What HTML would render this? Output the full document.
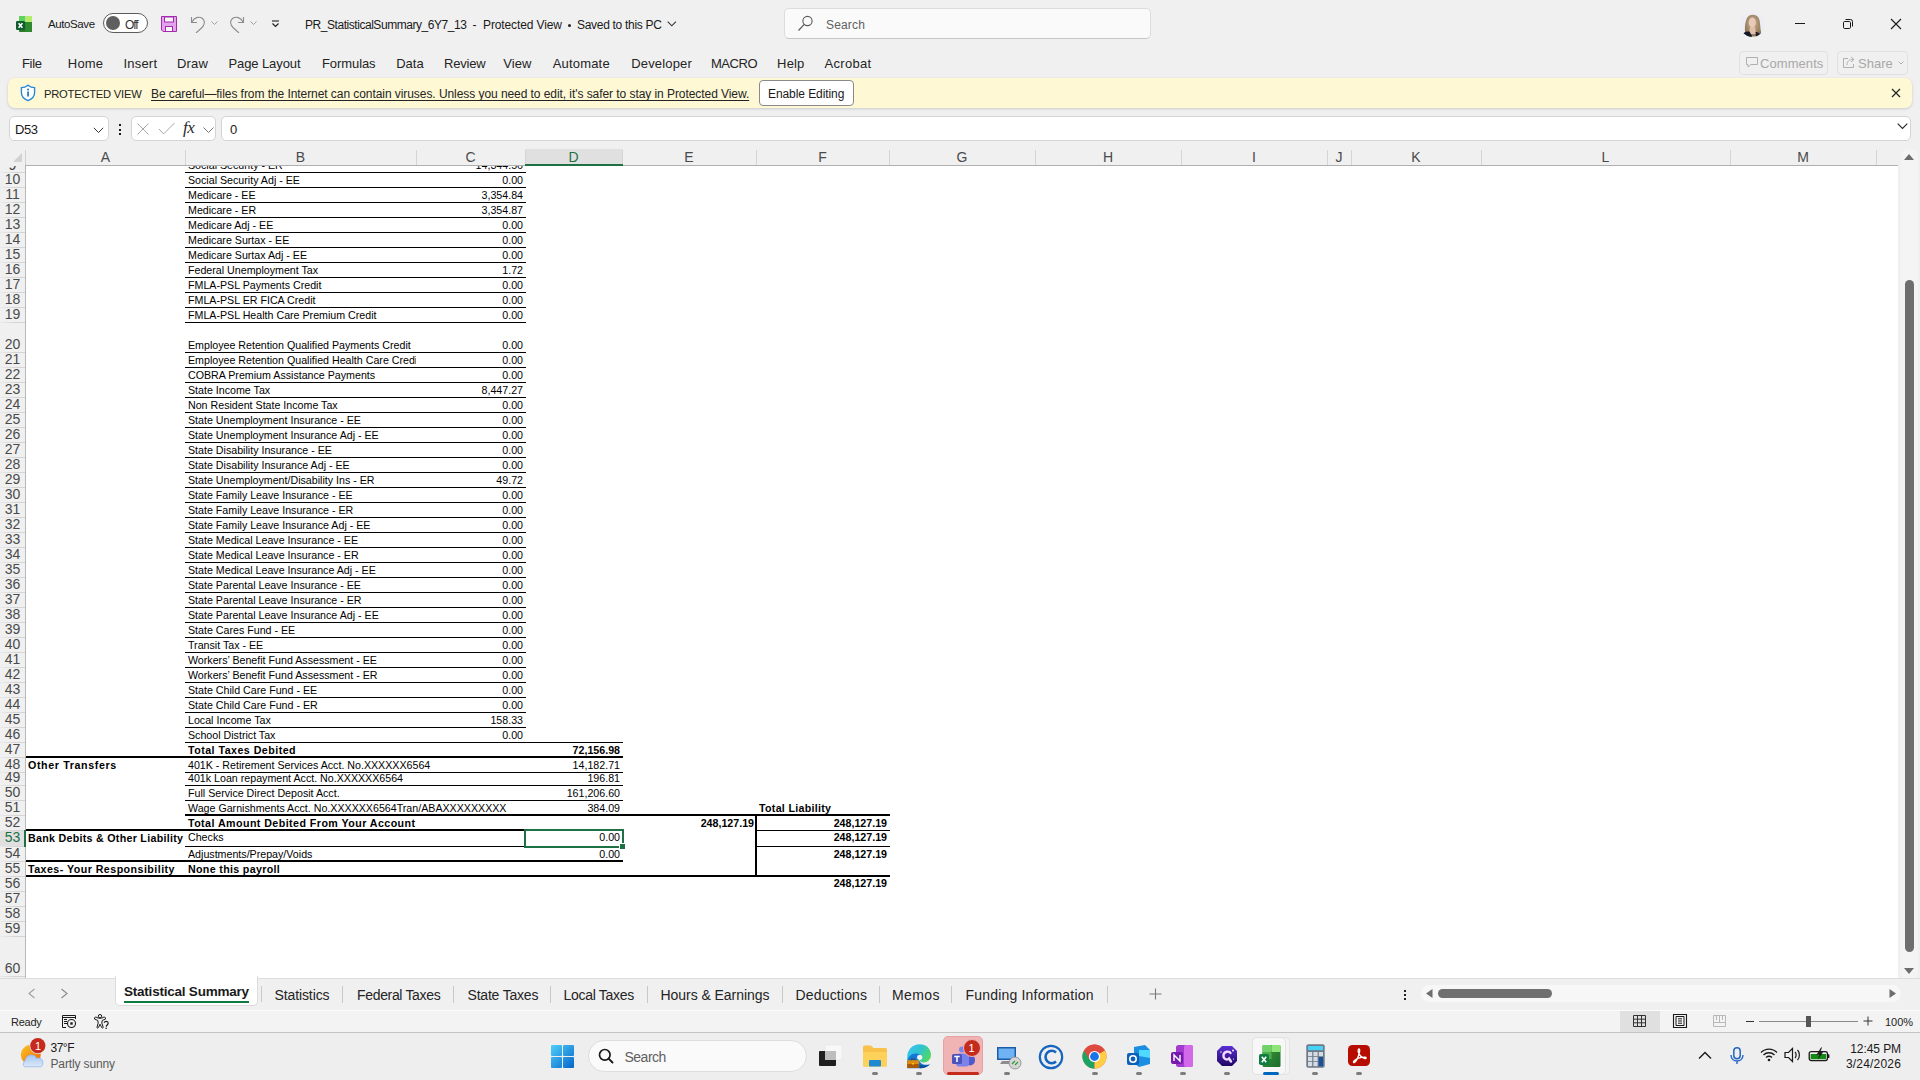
<!DOCTYPE html><html><head><meta charset="utf-8"><title>Excel</title><style>*{margin:0;padding:0;box-sizing:content-box}
html,body{width:1920px;height:1080px;overflow:hidden;background:#f0f0f0;font-family:"Liberation Sans", sans-serif}
.r{position:absolute}
.t{position:absolute;white-space:pre;line-height:1;font-family:"Liberation Sans", sans-serif}
</style></head><body><div class="r" style="left:0px;top:0px;width:1920px;height:147px;background:#f0f0f0;"></div>
<svg class="r" style="left:16px;top:16px;" width="16" height="16" viewBox="0 0 16 16"><rect x="3" y="0" width="6.5" height="6" fill="#5fd35f"/><rect x="9.5" y="0" width="6.5" height="6" fill="#b6ec6c"/><rect x="3" y="6" width="13" height="10" rx="0.8" fill="#2b7d2b"/><rect x="9.5" y="6" width="6.5" height="10" fill="#2f8a2f"/><rect x="0" y="5" width="9" height="9" rx="1.2" fill="#0e5c2f"/><path d="M2.6 7.3 L6.4 11.7 M6.4 7.3 L2.6 11.7" stroke="#fff" stroke-width="1.6"/></svg>
<div id="t1" class="t" style="top:19px;font-size:11.5px;color:#1a1a1a;letter-spacing:-0.400px;left:48px;">AutoSave</div>
<div class="r" style="left:103px;top:13px;width:43px;height:18px;border:1px solid #5c5c5c;border-radius:10px;background:#fff"></div>
<div class="r" style="left:106px;top:16px;width:14px;height:14px;border-radius:50%;background:#5f5f5f"></div>
<div id="t2" class="t" style="top:19px;font-size:12px;color:#333;letter-spacing:-1.050px;left:125px;">Off</div>
<svg class="r" style="left:161px;top:16px;" width="16" height="16" viewBox="0 0 16 16"><path d="M0.5 0.5 H15.5 V15.5 H2 L0.5 14 Z" fill="#e3a3ea" stroke="#a22bb0" stroke-width="1"/><rect x="3.5" y="1" width="9" height="5" fill="#f6f6f6" stroke="#a22bb0" stroke-width="1"/><rect x="4.5" y="10.5" width="7" height="5" fill="#fafafa" stroke="#a22bb0" stroke-width="1"/></svg>
<svg class="r" style="left:190px;top:15px;" width="18" height="18" viewBox="0 0 18 18"><path d="M1.5 2 V7.5 H7" fill="none" stroke="#8c8c8c" stroke-width="1.1"/><path d="M2 7 C4 2.5 9 1 12.5 3.5 C15.5 6 14.5 10 12 12.5 L6 18" fill="none" stroke="#8c8c8c" stroke-width="1.1"/></svg>
<svg class="r" style="left:211px;top:21px;" width="8" height="5" viewBox="0 0 8 5"><path d="M0.5 0.5 L3.5 3.5 L6.5 0.5" fill="none" stroke="#a0a0a0" stroke-width="1"/></svg>
<svg class="r" style="left:229px;top:15px;" width="18" height="18" viewBox="0 0 18 18"><path d="M14.5 2 V7.5 H9" fill="none" stroke="#8c8c8c" stroke-width="1.1"/><path d="M14 7 C12 2.5 7 1 3.5 3.5 C0.5 6 1.5 10 4 12.5 L10 18" fill="none" stroke="#8c8c8c" stroke-width="1.1"/></svg>
<svg class="r" style="left:250px;top:21px;" width="8" height="5" viewBox="0 0 8 5"><path d="M0.5 0.5 L3.5 3.5 L6.5 0.5" fill="none" stroke="#a0a0a0" stroke-width="1"/></svg>
<svg class="r" style="left:271px;top:20px;" width="9" height="8" viewBox="0 0 9 8"><path d="M1 1 H8" stroke="#222" stroke-width="1.1"/><path d="M1.5 3.5 L4.5 6.5 L7.5 3.5" fill="none" stroke="#222" stroke-width="1.2"/></svg>
<div id="t3" class="t" style="top:19px;font-size:12px;color:#1a1a1a;letter-spacing:-0.452px;left:305px;">PR_StatisticalSummary_6Y7_13</div>
<div id="t4" class="t" style="top:19px;font-size:12px;color:#1a1a1a;letter-spacing:0.000px;left:472.5px;">-</div>
<div id="t5" class="t" style="top:19px;font-size:12px;color:#1a1a1a;letter-spacing:-0.115px;left:483px;">Protected View</div>
<div class="r" style="left:568px;top:24px;width:3px;height:3px;background:#222;border-radius:50%;"></div>
<div id="t6" class="t" style="top:19px;font-size:12px;color:#1a1a1a;letter-spacing:-0.300px;left:577px;">Saved to this PC</div>
<svg class="r" style="left:667px;top:21px;" width="10" height="7" viewBox="0 0 10 7"><path d="M0.7 0.7 L4.8 4.8 L8.9 0.7" fill="none" stroke="#333" stroke-width="1.1"/></svg>
<div class="r" style="left:784px;top:8px;width:365px;height:29px;border:1px solid #dcdcdc;border-bottom-color:#c4c4c4;border-radius:5px;background:#fafafa"></div>
<svg class="r" style="left:797px;top:15px;" width="17" height="17" viewBox="0 0 17 17"><circle cx="10.5" cy="6" r="4.6" fill="none" stroke="#5a5a5a" stroke-width="1.1"/><path d="M7.2 9.4 L1.5 15.5" stroke="#5a5a5a" stroke-width="1.2"/></svg>
<div id="t7" class="t" style="top:19px;font-size:12px;color:#616161;letter-spacing:0.160px;left:826px;">Search</div>
<svg class="r" style="left:1740px;top:12px;" width="25" height="25" viewBox="0 0 25 25"><defs><clipPath id="avc"><circle cx="12.3" cy="12.5" r="12.3"/></clipPath><radialGradient id="hair" cx="0.5" cy="0.4" r="0.6"><stop offset="0" stop-color="#c9b08e"/><stop offset="1" stop-color="#8c7456"/></radialGradient></defs><g clip-path="url(#avc)"><rect width="25" height="25" fill="#eceef4"/><path d="M6 24 C4 18 5 10 7 6 C9 2 15 1.5 18 5 C20.5 8 20 14 21 20 C21.5 23 20 25 18 25 Z" fill="url(#hair)"/><ellipse cx="12.3" cy="10.5" rx="3.6" ry="5" fill="#e8cab6"/><path d="M10 15 H15 L16 22 H9 Z" fill="#e2bfa8"/><path d="M1 25 C3 20 6 19 9.5 19.5 L12.5 25 Z" fill="#15172a"/><path d="M15.5 20 C17.5 19.5 20 21 22 25 H16 Z" fill="#1d1f30"/></g></svg>
<div class="r" style="left:1795px;top:23px;width:10px;height:1px;background:#1a1a1a;"></div>
<svg class="r" style="left:1842px;top:18px;" width="12" height="12" viewBox="0 0 12 12"><rect x="1.5" y="3.5" width="7" height="7" rx="1.2" fill="none" stroke="#1a1a1a" stroke-width="1"/><path d="M3.5 1.5 H8.5 A2 2 0 0 1 10.5 3.5 V8.5" fill="none" stroke="#1a1a1a" stroke-width="1"/></svg>
<svg class="r" style="left:1890px;top:18px;" width="12" height="12" viewBox="0 0 12 12"><path d="M1 1 L11 11 M11 1 L1 11" stroke="#1a1a1a" stroke-width="1.1"/></svg>
<div id="t8" class="t" style="top:57px;font-size:13px;color:#242424;letter-spacing:-0.333px;left:22.0px;">File</div>
<div id="t9" class="t" style="top:57px;font-size:13px;color:#242424;letter-spacing:0.200px;left:67.8px;">Home</div>
<div id="t10" class="t" style="top:57px;font-size:13px;color:#242424;letter-spacing:0.200px;left:123.5px;">Insert</div>
<div id="t11" class="t" style="top:57px;font-size:13px;color:#242424;letter-spacing:0.200px;left:177.0px;">Draw</div>
<div id="t12" class="t" style="top:57px;font-size:13px;color:#242424;letter-spacing:-0.100px;left:228.5px;">Page Layout</div>
<div id="t13" class="t" style="top:57px;font-size:13px;color:#242424;letter-spacing:-0.086px;left:322.0px;">Formulas</div>
<div id="t14" class="t" style="top:57px;font-size:13px;color:#242424;letter-spacing:0.033px;left:396.2px;">Data</div>
<div id="t15" class="t" style="top:57px;font-size:13px;color:#242424;letter-spacing:-0.240px;left:444.1px;">Review</div>
<div id="t16" class="t" style="top:57px;font-size:13px;color:#242424;letter-spacing:0.067px;left:503.3px;">View</div>
<div id="t17" class="t" style="top:57px;font-size:13px;color:#242424;letter-spacing:0.186px;left:552.7px;">Automate</div>
<div id="t18" class="t" style="top:57px;font-size:13px;color:#242424;letter-spacing:0.162px;left:631.2px;">Developer</div>
<div id="t19" class="t" style="top:57px;font-size:13px;color:#242424;letter-spacing:-0.400px;left:710.9px;">MACRO</div>
<div id="t20" class="t" style="top:57px;font-size:13px;color:#242424;letter-spacing:0.167px;left:777.1px;">Help</div>
<div id="t21" class="t" style="top:57px;font-size:13px;color:#242424;letter-spacing:0.283px;left:824.6px;">Acrobat</div>
<div class="r" style="left:1739px;top:51px;width:87px;height:22px;border:1px solid #e0e0e0;border-radius:4px"></div>
<svg class="r" style="left:1744px;top:54px;" width="16" height="16" viewBox="0 0 16 16"><path d="M2.5 3.5 H13.5 V10.5 H7 L4 13 V10.5 H2.5 Z" fill="none" stroke="#b0b0b0" stroke-width="1"/></svg>
<div id="t22" class="t" style="top:57px;font-size:13px;color:#a8a8a8;letter-spacing:0.071px;left:1760px;">Comments</div>
<div class="r" style="left:1837px;top:51px;width:69px;height:22px;border:1px solid #e0e0e0;border-radius:4px"></div>
<svg class="r" style="left:1841px;top:54px;" width="16" height="16" viewBox="0 0 16 16"><path d="M7 4.5 H2.5 V13.5 H12.5 V10" fill="none" stroke="#b0b0b0" stroke-width="1"/><path d="M6 11 C6 7 8.5 5.5 12 5.5 M10 3 L13 5.5 L10 8" fill="none" stroke="#b0b0b0" stroke-width="1"/></svg>
<div id="t23" class="t" style="top:57px;font-size:13px;color:#a8a8a8;letter-spacing:0.000px;left:1858px;">Share</div>
<svg class="r" style="left:1898px;top:61px;" width="7" height="5" viewBox="0 0 7 5"><path d="M0.5 0.5 L3 3 L5.5 0.5" fill="none" stroke="#b0b0b0" stroke-width="1"/></svg>
<div class="r" style="left:8px;top:78px;width:1904px;height:30px;border-radius:7px;background:#fef8d5;box-shadow:0 1px 3px rgba(0,0,0,0.16)"></div>
<svg class="r" style="left:20px;top:84px;" width="16" height="18" viewBox="0 0 16 18"><path d="M8 1.2 C10 2.8 12.5 3.6 14.6 3.6 V8.6 C14.6 12.6 11.8 15.3 8 16.6 C4.2 15.3 1.4 12.6 1.4 8.6 V3.6 C3.5 3.6 6 2.8 8 1.2 Z" fill="#fff" stroke="#2b88d8" stroke-width="1.4"/><rect x="7.2" y="7.5" width="1.7" height="5" fill="#1a73c7"/><circle cx="8" cy="5.6" r="1" fill="#1a73c7"/></svg>
<div id="t24" class="t" style="top:89px;font-size:11.2px;color:#242424;letter-spacing:-0.231px;left:44px;">PROTECTED VIEW</div>
<div id="t25" class="t" style="top:88px;font-size:12px;color:#242424;letter-spacing:-0.064px;left:151px;text-decoration:underline;text-underline-offset:1.5px;">Be careful—files from the Internet can contain viruses. Unless you need to edit, it's safer to stay in Protected View.</div>
<div class="r" style="left:759px;top:80px;width:93px;height:24px;border:1px solid #8a8a8a;border-radius:4px;background:#fff"></div>
<div id="t26" class="t" style="top:88px;font-size:12px;color:#1a1a1a;letter-spacing:-0.077px;left:768px;">Enable Editing</div>
<svg class="r" style="left:1891px;top:88px;" width="10" height="10" viewBox="0 0 10 10"><path d="M1 1 L9 9 M9 1 L1 9" stroke="#242424" stroke-width="1.2"/></svg>
<div class="r" style="left:9px;top:116px;width:98px;height:23px;border:1px solid #d4d4d4;border-radius:5px;background:#fff"></div>
<div id="t27" class="t" style="top:123px;font-size:13px;color:#1a1a1a;letter-spacing:-0.450px;left:15px;">D53</div>
<svg class="r" style="left:93px;top:127px;" width="11" height="7" viewBox="0 0 11 7"><path d="M0.8 0.8 L5.5 5.5 L10.2 0.8" fill="none" stroke="#333" stroke-width="1"/></svg>
<div class="r" style="left:119px;top:124px;width:2px;height:2px;background:#1a1a1a;"></div>
<div class="r" style="left:119px;top:128.5px;width:2px;height:2px;background:#1a1a1a;"></div>
<div class="r" style="left:119px;top:133px;width:2px;height:2px;background:#1a1a1a;"></div>
<div class="r" style="left:131px;top:116px;width:83px;height:23px;border:1px solid #d4d4d4;border-radius:5px;background:#fff"></div>
<svg class="r" style="left:137px;top:123px;" width="12" height="12" viewBox="0 0 12 12"><path d="M0.5 0.5 L11.5 11.5 M11.5 0.5 L0.5 11.5" stroke="#a8a8a8" stroke-width="1"/></svg>
<svg class="r" style="left:158px;top:122px;" width="18" height="13" viewBox="0 0 18 13"><path d="M1 7 L5.5 12 L16.5 1" fill="none" stroke="#a8a8a8" stroke-width="1"/></svg>
<div id="t28" class="t" style="top:119px;font-size:17px;color:#2a2a2a;left:183px;font-family:'Liberation Serif',serif;font-style:italic;letter-spacing:-0.5px;">fx</div>
<svg class="r" style="left:203px;top:127px;" width="11" height="6" viewBox="0 0 11 6"><path d="M0.5 0.5 L5.5 5.5 L10.5 0.5" fill="none" stroke="#777" stroke-width="1"/></svg>
<div class="r" style="left:221px;top:116px;width:1688px;height:23px;border:1px solid #d4d4d4;border-radius:5px;background:#fff"></div>
<div id="t29" class="t" style="top:123px;font-size:13px;color:#1a1a1a;left:230px;">0</div>
<svg class="r" style="left:1897px;top:123px;" width="11" height="7" viewBox="0 0 11 7"><path d="M0.7 0.7 L5.5 5.5 L10.3 0.7" fill="none" stroke="#242424" stroke-width="1.1"/></svg>
<svg class="r" style="left:12px;top:152px;" width="11" height="11" viewBox="0 0 11 11"><path d="M10 1 V10 H1 Z" fill="#d2d2d2"/></svg>
<div class="r" style="left:25px;top:150px;width:1px;height:16px;background:#d0d0d0;"></div>
<div class="r" style="left:525px;top:149px;width:98px;height:16px;background:#e0e0e0;"></div>
<div id="t30" class="t" style="top:150px;font-size:14px;color:#4a4a4a;left:105.5px;transform:translateX(-50%);">A</div>
<div class="r" style="left:185px;top:150px;width:1px;height:15px;background:#d4d4d4;"></div>
<div id="t31" class="t" style="top:150px;font-size:14px;color:#4a4a4a;left:300.5px;transform:translateX(-50%);">B</div>
<div class="r" style="left:416px;top:150px;width:1px;height:15px;background:#d4d4d4;"></div>
<div id="t32" class="t" style="top:150px;font-size:14px;color:#4a4a4a;left:470.5px;transform:translateX(-50%);">C</div>
<div class="r" style="left:525px;top:150px;width:1px;height:15px;background:#d4d4d4;"></div>
<div id="t33" class="t" style="top:150px;font-size:14px;color:#1e7145;left:573.5px;transform:translateX(-50%);">D</div>
<div class="r" style="left:622px;top:150px;width:1px;height:15px;background:#d4d4d4;"></div>
<div id="t34" class="t" style="top:150px;font-size:14px;color:#4a4a4a;left:689.0px;transform:translateX(-50%);">E</div>
<div class="r" style="left:756px;top:150px;width:1px;height:15px;background:#d4d4d4;"></div>
<div id="t35" class="t" style="top:150px;font-size:14px;color:#4a4a4a;left:822.5px;transform:translateX(-50%);">F</div>
<div class="r" style="left:889px;top:150px;width:1px;height:15px;background:#d4d4d4;"></div>
<div id="t36" class="t" style="top:150px;font-size:14px;color:#4a4a4a;left:962.0px;transform:translateX(-50%);">G</div>
<div class="r" style="left:1035px;top:150px;width:1px;height:15px;background:#d4d4d4;"></div>
<div id="t37" class="t" style="top:150px;font-size:14px;color:#4a4a4a;left:1108.0px;transform:translateX(-50%);">H</div>
<div class="r" style="left:1181px;top:150px;width:1px;height:15px;background:#d4d4d4;"></div>
<div id="t38" class="t" style="top:150px;font-size:14px;color:#4a4a4a;left:1254.0px;transform:translateX(-50%);">I</div>
<div class="r" style="left:1327px;top:150px;width:1px;height:15px;background:#d4d4d4;"></div>
<div id="t39" class="t" style="top:150px;font-size:14px;color:#4a4a4a;left:1339.0px;transform:translateX(-50%);">J</div>
<div class="r" style="left:1351px;top:150px;width:1px;height:15px;background:#d4d4d4;"></div>
<div id="t40" class="t" style="top:150px;font-size:14px;color:#4a4a4a;left:1416.0px;transform:translateX(-50%);">K</div>
<div class="r" style="left:1481px;top:150px;width:1px;height:15px;background:#d4d4d4;"></div>
<div id="t41" class="t" style="top:150px;font-size:14px;color:#4a4a4a;left:1605.5px;transform:translateX(-50%);">L</div>
<div class="r" style="left:1730px;top:150px;width:1px;height:15px;background:#d4d4d4;"></div>
<div id="t42" class="t" style="top:150px;font-size:14px;color:#4a4a4a;left:1803.0px;transform:translateX(-50%);">M</div>
<div class="r" style="left:1876px;top:150px;width:1px;height:15px;background:#d4d4d4;"></div>
<div class="r" style="left:25px;top:165px;width:1873px;height:1px;background:#b0b0b0;"></div>
<div class="r" style="left:525px;top:164px;width:98px;height:2px;background:#1e7145;"></div>
<div class="r" style="left:0px;top:166px;width:25px;height:812px;background:#f0f0f0;"></div>
<div class="r" style="left:0px;top:830px;width:24px;height:17px;background:#e0e0e0;"></div>
<div class="r" style="left:0px;top:172px;width:25px;height:1px;background:linear-gradient(to right,#ececec,#d4d4d4 60%);"></div>
<div class="r" style="left:0;top:166px;width:25px;height:6px;overflow:hidden"><div class="t" style="top:-8px;left:12.5px;transform:translateX(-50%);font-size:14px;color:#444">9</div></div>
<div class="r" style="left:0px;top:187px;width:25px;height:1px;background:linear-gradient(to right,#ececec,#d4d4d4 60%);"></div>
<div id="t43" class="t" style="top:172px;font-size:14px;color:#4a4a4a;left:12.5px;transform:translateX(-50%);">10</div>
<div class="r" style="left:0px;top:202px;width:25px;height:1px;background:linear-gradient(to right,#ececec,#d4d4d4 60%);"></div>
<div id="t44" class="t" style="top:187px;font-size:14px;color:#4a4a4a;left:12.5px;transform:translateX(-50%);">11</div>
<div class="r" style="left:0px;top:217px;width:25px;height:1px;background:linear-gradient(to right,#ececec,#d4d4d4 60%);"></div>
<div id="t45" class="t" style="top:202px;font-size:14px;color:#4a4a4a;left:12.5px;transform:translateX(-50%);">12</div>
<div class="r" style="left:0px;top:232px;width:25px;height:1px;background:linear-gradient(to right,#ececec,#d4d4d4 60%);"></div>
<div id="t46" class="t" style="top:217px;font-size:14px;color:#4a4a4a;left:12.5px;transform:translateX(-50%);">13</div>
<div class="r" style="left:0px;top:247px;width:25px;height:1px;background:linear-gradient(to right,#ececec,#d4d4d4 60%);"></div>
<div id="t47" class="t" style="top:232px;font-size:14px;color:#4a4a4a;left:12.5px;transform:translateX(-50%);">14</div>
<div class="r" style="left:0px;top:262px;width:25px;height:1px;background:linear-gradient(to right,#ececec,#d4d4d4 60%);"></div>
<div id="t48" class="t" style="top:247px;font-size:14px;color:#4a4a4a;left:12.5px;transform:translateX(-50%);">15</div>
<div class="r" style="left:0px;top:277px;width:25px;height:1px;background:linear-gradient(to right,#ececec,#d4d4d4 60%);"></div>
<div id="t49" class="t" style="top:262px;font-size:14px;color:#4a4a4a;left:12.5px;transform:translateX(-50%);">16</div>
<div class="r" style="left:0px;top:292px;width:25px;height:1px;background:linear-gradient(to right,#ececec,#d4d4d4 60%);"></div>
<div id="t50" class="t" style="top:277px;font-size:14px;color:#4a4a4a;left:12.5px;transform:translateX(-50%);">17</div>
<div class="r" style="left:0px;top:307px;width:25px;height:1px;background:linear-gradient(to right,#ececec,#d4d4d4 60%);"></div>
<div id="t51" class="t" style="top:292px;font-size:14px;color:#4a4a4a;left:12.5px;transform:translateX(-50%);">18</div>
<div class="r" style="left:0px;top:322px;width:25px;height:1px;background:linear-gradient(to right,#ececec,#d4d4d4 60%);"></div>
<div id="t52" class="t" style="top:307px;font-size:14px;color:#4a4a4a;left:12.5px;transform:translateX(-50%);">19</div>
<div class="r" style="left:0px;top:352px;width:25px;height:1px;background:linear-gradient(to right,#ececec,#d4d4d4 60%);"></div>
<div id="t53" class="t" style="top:337px;font-size:14px;color:#4a4a4a;left:12.5px;transform:translateX(-50%);">20</div>
<div class="r" style="left:0px;top:367px;width:25px;height:1px;background:linear-gradient(to right,#ececec,#d4d4d4 60%);"></div>
<div id="t54" class="t" style="top:352px;font-size:14px;color:#4a4a4a;left:12.5px;transform:translateX(-50%);">21</div>
<div class="r" style="left:0px;top:382px;width:25px;height:1px;background:linear-gradient(to right,#ececec,#d4d4d4 60%);"></div>
<div id="t55" class="t" style="top:367px;font-size:14px;color:#4a4a4a;left:12.5px;transform:translateX(-50%);">22</div>
<div class="r" style="left:0px;top:397px;width:25px;height:1px;background:linear-gradient(to right,#ececec,#d4d4d4 60%);"></div>
<div id="t56" class="t" style="top:382px;font-size:14px;color:#4a4a4a;left:12.5px;transform:translateX(-50%);">23</div>
<div class="r" style="left:0px;top:412px;width:25px;height:1px;background:linear-gradient(to right,#ececec,#d4d4d4 60%);"></div>
<div id="t57" class="t" style="top:397px;font-size:14px;color:#4a4a4a;left:12.5px;transform:translateX(-50%);">24</div>
<div class="r" style="left:0px;top:427px;width:25px;height:1px;background:linear-gradient(to right,#ececec,#d4d4d4 60%);"></div>
<div id="t58" class="t" style="top:412px;font-size:14px;color:#4a4a4a;left:12.5px;transform:translateX(-50%);">25</div>
<div class="r" style="left:0px;top:442px;width:25px;height:1px;background:linear-gradient(to right,#ececec,#d4d4d4 60%);"></div>
<div id="t59" class="t" style="top:427px;font-size:14px;color:#4a4a4a;left:12.5px;transform:translateX(-50%);">26</div>
<div class="r" style="left:0px;top:457px;width:25px;height:1px;background:linear-gradient(to right,#ececec,#d4d4d4 60%);"></div>
<div id="t60" class="t" style="top:442px;font-size:14px;color:#4a4a4a;left:12.5px;transform:translateX(-50%);">27</div>
<div class="r" style="left:0px;top:472px;width:25px;height:1px;background:linear-gradient(to right,#ececec,#d4d4d4 60%);"></div>
<div id="t61" class="t" style="top:457px;font-size:14px;color:#4a4a4a;left:12.5px;transform:translateX(-50%);">28</div>
<div class="r" style="left:0px;top:487px;width:25px;height:1px;background:linear-gradient(to right,#ececec,#d4d4d4 60%);"></div>
<div id="t62" class="t" style="top:472px;font-size:14px;color:#4a4a4a;left:12.5px;transform:translateX(-50%);">29</div>
<div class="r" style="left:0px;top:502px;width:25px;height:1px;background:linear-gradient(to right,#ececec,#d4d4d4 60%);"></div>
<div id="t63" class="t" style="top:487px;font-size:14px;color:#4a4a4a;left:12.5px;transform:translateX(-50%);">30</div>
<div class="r" style="left:0px;top:517px;width:25px;height:1px;background:linear-gradient(to right,#ececec,#d4d4d4 60%);"></div>
<div id="t64" class="t" style="top:502px;font-size:14px;color:#4a4a4a;left:12.5px;transform:translateX(-50%);">31</div>
<div class="r" style="left:0px;top:532px;width:25px;height:1px;background:linear-gradient(to right,#ececec,#d4d4d4 60%);"></div>
<div id="t65" class="t" style="top:517px;font-size:14px;color:#4a4a4a;left:12.5px;transform:translateX(-50%);">32</div>
<div class="r" style="left:0px;top:547px;width:25px;height:1px;background:linear-gradient(to right,#ececec,#d4d4d4 60%);"></div>
<div id="t66" class="t" style="top:532px;font-size:14px;color:#4a4a4a;left:12.5px;transform:translateX(-50%);">33</div>
<div class="r" style="left:0px;top:562px;width:25px;height:1px;background:linear-gradient(to right,#ececec,#d4d4d4 60%);"></div>
<div id="t67" class="t" style="top:547px;font-size:14px;color:#4a4a4a;left:12.5px;transform:translateX(-50%);">34</div>
<div class="r" style="left:0px;top:577px;width:25px;height:1px;background:linear-gradient(to right,#ececec,#d4d4d4 60%);"></div>
<div id="t68" class="t" style="top:562px;font-size:14px;color:#4a4a4a;left:12.5px;transform:translateX(-50%);">35</div>
<div class="r" style="left:0px;top:592px;width:25px;height:1px;background:linear-gradient(to right,#ececec,#d4d4d4 60%);"></div>
<div id="t69" class="t" style="top:577px;font-size:14px;color:#4a4a4a;left:12.5px;transform:translateX(-50%);">36</div>
<div class="r" style="left:0px;top:607px;width:25px;height:1px;background:linear-gradient(to right,#ececec,#d4d4d4 60%);"></div>
<div id="t70" class="t" style="top:592px;font-size:14px;color:#4a4a4a;left:12.5px;transform:translateX(-50%);">37</div>
<div class="r" style="left:0px;top:622px;width:25px;height:1px;background:linear-gradient(to right,#ececec,#d4d4d4 60%);"></div>
<div id="t71" class="t" style="top:607px;font-size:14px;color:#4a4a4a;left:12.5px;transform:translateX(-50%);">38</div>
<div class="r" style="left:0px;top:637px;width:25px;height:1px;background:linear-gradient(to right,#ececec,#d4d4d4 60%);"></div>
<div id="t72" class="t" style="top:622px;font-size:14px;color:#4a4a4a;left:12.5px;transform:translateX(-50%);">39</div>
<div class="r" style="left:0px;top:652px;width:25px;height:1px;background:linear-gradient(to right,#ececec,#d4d4d4 60%);"></div>
<div id="t73" class="t" style="top:637px;font-size:14px;color:#4a4a4a;left:12.5px;transform:translateX(-50%);">40</div>
<div class="r" style="left:0px;top:667px;width:25px;height:1px;background:linear-gradient(to right,#ececec,#d4d4d4 60%);"></div>
<div id="t74" class="t" style="top:652px;font-size:14px;color:#4a4a4a;left:12.5px;transform:translateX(-50%);">41</div>
<div class="r" style="left:0px;top:682px;width:25px;height:1px;background:linear-gradient(to right,#ececec,#d4d4d4 60%);"></div>
<div id="t75" class="t" style="top:667px;font-size:14px;color:#4a4a4a;left:12.5px;transform:translateX(-50%);">42</div>
<div class="r" style="left:0px;top:697px;width:25px;height:1px;background:linear-gradient(to right,#ececec,#d4d4d4 60%);"></div>
<div id="t76" class="t" style="top:682px;font-size:14px;color:#4a4a4a;left:12.5px;transform:translateX(-50%);">43</div>
<div class="r" style="left:0px;top:712px;width:25px;height:1px;background:linear-gradient(to right,#ececec,#d4d4d4 60%);"></div>
<div id="t77" class="t" style="top:697px;font-size:14px;color:#4a4a4a;left:12.5px;transform:translateX(-50%);">44</div>
<div class="r" style="left:0px;top:727px;width:25px;height:1px;background:linear-gradient(to right,#ececec,#d4d4d4 60%);"></div>
<div id="t78" class="t" style="top:712px;font-size:14px;color:#4a4a4a;left:12.5px;transform:translateX(-50%);">45</div>
<div class="r" style="left:0px;top:742px;width:25px;height:1px;background:linear-gradient(to right,#ececec,#d4d4d4 60%);"></div>
<div id="t79" class="t" style="top:727px;font-size:14px;color:#4a4a4a;left:12.5px;transform:translateX(-50%);">46</div>
<div class="r" style="left:0px;top:757px;width:25px;height:1px;background:linear-gradient(to right,#ececec,#d4d4d4 60%);"></div>
<div id="t80" class="t" style="top:742px;font-size:14px;color:#4a4a4a;left:12.5px;transform:translateX(-50%);">47</div>
<div class="r" style="left:0px;top:772px;width:25px;height:1px;background:linear-gradient(to right,#ececec,#d4d4d4 60%);"></div>
<div id="t81" class="t" style="top:757px;font-size:14px;color:#4a4a4a;left:12.5px;transform:translateX(-50%);">48</div>
<div class="r" style="left:0px;top:785px;width:25px;height:1px;background:linear-gradient(to right,#ececec,#d4d4d4 60%);"></div>
<div id="t82" class="t" style="top:770px;font-size:14px;color:#4a4a4a;left:12.5px;transform:translateX(-50%);">49</div>
<div class="r" style="left:0px;top:800px;width:25px;height:1px;background:linear-gradient(to right,#ececec,#d4d4d4 60%);"></div>
<div id="t83" class="t" style="top:785px;font-size:14px;color:#4a4a4a;left:12.5px;transform:translateX(-50%);">50</div>
<div class="r" style="left:0px;top:815px;width:25px;height:1px;background:linear-gradient(to right,#ececec,#d4d4d4 60%);"></div>
<div id="t84" class="t" style="top:800px;font-size:14px;color:#4a4a4a;left:12.5px;transform:translateX(-50%);">51</div>
<div class="r" style="left:0px;top:830px;width:25px;height:1px;background:linear-gradient(to right,#ececec,#d4d4d4 60%);"></div>
<div id="t85" class="t" style="top:815px;font-size:14px;color:#4a4a4a;left:12.5px;transform:translateX(-50%);">52</div>
<div class="r" style="left:0px;top:846px;width:25px;height:1px;background:linear-gradient(to right,#ececec,#d4d4d4 60%);"></div>
<div id="t86" class="t" style="top:830px;font-size:14px;color:#1e7145;left:12.5px;transform:translateX(-50%);">53</div>
<div class="r" style="left:0px;top:861px;width:25px;height:1px;background:linear-gradient(to right,#ececec,#d4d4d4 60%);"></div>
<div id="t87" class="t" style="top:846px;font-size:14px;color:#4a4a4a;left:12.5px;transform:translateX(-50%);">54</div>
<div class="r" style="left:0px;top:876px;width:25px;height:1px;background:linear-gradient(to right,#ececec,#d4d4d4 60%);"></div>
<div id="t88" class="t" style="top:861px;font-size:14px;color:#4a4a4a;left:12.5px;transform:translateX(-50%);">55</div>
<div class="r" style="left:0px;top:891px;width:25px;height:1px;background:linear-gradient(to right,#ececec,#d4d4d4 60%);"></div>
<div id="t89" class="t" style="top:876px;font-size:14px;color:#4a4a4a;left:12.5px;transform:translateX(-50%);">56</div>
<div class="r" style="left:0px;top:906px;width:25px;height:1px;background:linear-gradient(to right,#ececec,#d4d4d4 60%);"></div>
<div id="t90" class="t" style="top:891px;font-size:14px;color:#4a4a4a;left:12.5px;transform:translateX(-50%);">57</div>
<div class="r" style="left:0px;top:921px;width:25px;height:1px;background:linear-gradient(to right,#ececec,#d4d4d4 60%);"></div>
<div id="t91" class="t" style="top:906px;font-size:14px;color:#4a4a4a;left:12.5px;transform:translateX(-50%);">58</div>
<div class="r" style="left:0px;top:936px;width:25px;height:1px;background:linear-gradient(to right,#ececec,#d4d4d4 60%);"></div>
<div id="t92" class="t" style="top:921px;font-size:14px;color:#4a4a4a;left:12.5px;transform:translateX(-50%);">59</div>
<div class="r" style="left:0px;top:976px;width:25px;height:1px;background:linear-gradient(to right,#ececec,#d4d4d4 60%);"></div>
<div id="t93" class="t" style="top:961px;font-size:14px;color:#4a4a4a;left:12.5px;transform:translateX(-50%);">60</div>
<div class="r" style="left:25px;top:166px;width:1px;height:812px;background:#b8b8b8;"></div>
<div class="r" style="left:24px;top:830px;width:2px;height:17px;background:#1e7145;"></div>
<div class="r" style="left:26px;top:166px;width:1872px;height:812px;background:#fff"></div>
<div class="r" id="grid" style="left:0;top:166px;width:1898px;height:812px;overflow:hidden"><div class="r" style="left:0;top:-166px;width:1920px;height:1080px">
<div id="t94" class="t" style="top:160px;font-size:10.67px;color:#000;left:188px;">Social Security - ER</div>
<div id="t95" class="t" style="top:160px;font-size:10.67px;color:#000;right:1397px;">14,344.56</div>
<div id="t96" class="t" style="top:175px;font-size:10.67px;color:#000;left:188px;">Social Security Adj - EE</div>
<div id="t97" class="t" style="top:175px;font-size:10.67px;color:#000;right:1397px;">0.00</div>
<div id="t98" class="t" style="top:190px;font-size:10.67px;color:#000;left:188px;">Medicare - EE</div>
<div id="t99" class="t" style="top:190px;font-size:10.67px;color:#000;right:1397px;">3,354.84</div>
<div id="t100" class="t" style="top:205px;font-size:10.67px;color:#000;left:188px;">Medicare - ER</div>
<div id="t101" class="t" style="top:205px;font-size:10.67px;color:#000;right:1397px;">3,354.87</div>
<div id="t102" class="t" style="top:220px;font-size:10.67px;color:#000;left:188px;">Medicare Adj - EE</div>
<div id="t103" class="t" style="top:220px;font-size:10.67px;color:#000;right:1397px;">0.00</div>
<div id="t104" class="t" style="top:235px;font-size:10.67px;color:#000;left:188px;">Medicare Surtax - EE</div>
<div id="t105" class="t" style="top:235px;font-size:10.67px;color:#000;right:1397px;">0.00</div>
<div id="t106" class="t" style="top:250px;font-size:10.67px;color:#000;left:188px;">Medicare Surtax Adj - EE</div>
<div id="t107" class="t" style="top:250px;font-size:10.67px;color:#000;right:1397px;">0.00</div>
<div id="t108" class="t" style="top:265px;font-size:10.67px;color:#000;left:188px;">Federal Unemployment Tax</div>
<div id="t109" class="t" style="top:265px;font-size:10.67px;color:#000;right:1397px;">1.72</div>
<div id="t110" class="t" style="top:280px;font-size:10.67px;color:#000;left:188px;">FMLA-PSL Payments Credit</div>
<div id="t111" class="t" style="top:280px;font-size:10.67px;color:#000;right:1397px;">0.00</div>
<div id="t112" class="t" style="top:295px;font-size:10.67px;color:#000;left:188px;">FMLA-PSL ER FICA Credit</div>
<div id="t113" class="t" style="top:295px;font-size:10.67px;color:#000;right:1397px;">0.00</div>
<div id="t114" class="t" style="top:310px;font-size:10.67px;color:#000;left:188px;">FMLA-PSL Health Care Premium Credit</div>
<div id="t115" class="t" style="top:310px;font-size:10.67px;color:#000;right:1397px;">0.00</div>
<div id="t116" class="t" style="top:340px;font-size:10.67px;color:#000;left:188px;">Employee Retention Qualified Payments Credit</div>
<div id="t117" class="t" style="top:340px;font-size:10.67px;color:#000;right:1397px;">0.00</div>
<div id="t118" class="t" style="top:355px;font-size:10.67px;color:#000;left:188px;width:228px;overflow:hidden;">Employee Retention Qualified Health Care Credit</div>
<div id="t119" class="t" style="top:355px;font-size:10.67px;color:#000;right:1397px;">0.00</div>
<div id="t120" class="t" style="top:370px;font-size:10.67px;color:#000;left:188px;">COBRA Premium Assistance Payments</div>
<div id="t121" class="t" style="top:370px;font-size:10.67px;color:#000;right:1397px;">0.00</div>
<div id="t122" class="t" style="top:385px;font-size:10.67px;color:#000;left:188px;">State Income Tax</div>
<div id="t123" class="t" style="top:385px;font-size:10.67px;color:#000;right:1397px;">8,447.27</div>
<div id="t124" class="t" style="top:400px;font-size:10.67px;color:#000;left:188px;">Non Resident State Income Tax</div>
<div id="t125" class="t" style="top:400px;font-size:10.67px;color:#000;right:1397px;">0.00</div>
<div id="t126" class="t" style="top:415px;font-size:10.67px;color:#000;left:188px;">State Unemployment Insurance - EE</div>
<div id="t127" class="t" style="top:415px;font-size:10.67px;color:#000;right:1397px;">0.00</div>
<div id="t128" class="t" style="top:430px;font-size:10.67px;color:#000;left:188px;">State Unemployment Insurance Adj - EE</div>
<div id="t129" class="t" style="top:430px;font-size:10.67px;color:#000;right:1397px;">0.00</div>
<div id="t130" class="t" style="top:445px;font-size:10.67px;color:#000;left:188px;">State Disability Insurance - EE</div>
<div id="t131" class="t" style="top:445px;font-size:10.67px;color:#000;right:1397px;">0.00</div>
<div id="t132" class="t" style="top:460px;font-size:10.67px;color:#000;left:188px;">State Disability Insurance Adj - EE</div>
<div id="t133" class="t" style="top:460px;font-size:10.67px;color:#000;right:1397px;">0.00</div>
<div id="t134" class="t" style="top:475px;font-size:10.67px;color:#000;left:188px;">State Unemployment/Disability Ins - ER</div>
<div id="t135" class="t" style="top:475px;font-size:10.67px;color:#000;right:1397px;">49.72</div>
<div id="t136" class="t" style="top:490px;font-size:10.67px;color:#000;left:188px;">State Family Leave Insurance - EE</div>
<div id="t137" class="t" style="top:490px;font-size:10.67px;color:#000;right:1397px;">0.00</div>
<div id="t138" class="t" style="top:505px;font-size:10.67px;color:#000;left:188px;">State Family Leave Insurance - ER</div>
<div id="t139" class="t" style="top:505px;font-size:10.67px;color:#000;right:1397px;">0.00</div>
<div id="t140" class="t" style="top:520px;font-size:10.67px;color:#000;left:188px;">State Family Leave Insurance Adj - EE</div>
<div id="t141" class="t" style="top:520px;font-size:10.67px;color:#000;right:1397px;">0.00</div>
<div id="t142" class="t" style="top:535px;font-size:10.67px;color:#000;left:188px;">State Medical Leave Insurance - EE</div>
<div id="t143" class="t" style="top:535px;font-size:10.67px;color:#000;right:1397px;">0.00</div>
<div id="t144" class="t" style="top:550px;font-size:10.67px;color:#000;left:188px;">State Medical Leave Insurance - ER</div>
<div id="t145" class="t" style="top:550px;font-size:10.67px;color:#000;right:1397px;">0.00</div>
<div id="t146" class="t" style="top:565px;font-size:10.67px;color:#000;left:188px;">State Medical Leave Insurance Adj - EE</div>
<div id="t147" class="t" style="top:565px;font-size:10.67px;color:#000;right:1397px;">0.00</div>
<div id="t148" class="t" style="top:580px;font-size:10.67px;color:#000;left:188px;">State Parental Leave Insurance - EE</div>
<div id="t149" class="t" style="top:580px;font-size:10.67px;color:#000;right:1397px;">0.00</div>
<div id="t150" class="t" style="top:595px;font-size:10.67px;color:#000;left:188px;">State Parental Leave Insurance - ER</div>
<div id="t151" class="t" style="top:595px;font-size:10.67px;color:#000;right:1397px;">0.00</div>
<div id="t152" class="t" style="top:610px;font-size:10.67px;color:#000;left:188px;">State Parental Leave Insurance Adj - EE</div>
<div id="t153" class="t" style="top:610px;font-size:10.67px;color:#000;right:1397px;">0.00</div>
<div id="t154" class="t" style="top:625px;font-size:10.67px;color:#000;left:188px;">State Cares Fund - EE</div>
<div id="t155" class="t" style="top:625px;font-size:10.67px;color:#000;right:1397px;">0.00</div>
<div id="t156" class="t" style="top:640px;font-size:10.67px;color:#000;left:188px;">Transit Tax - EE</div>
<div id="t157" class="t" style="top:640px;font-size:10.67px;color:#000;right:1397px;">0.00</div>
<div id="t158" class="t" style="top:655px;font-size:10.67px;color:#000;left:188px;">Workers’ Benefit Fund Assessment - EE</div>
<div id="t159" class="t" style="top:655px;font-size:10.67px;color:#000;right:1397px;">0.00</div>
<div id="t160" class="t" style="top:670px;font-size:10.67px;color:#000;left:188px;">Workers’ Benefit Fund Assessment - ER</div>
<div id="t161" class="t" style="top:670px;font-size:10.67px;color:#000;right:1397px;">0.00</div>
<div id="t162" class="t" style="top:685px;font-size:10.67px;color:#000;left:188px;">State Child Care Fund - EE</div>
<div id="t163" class="t" style="top:685px;font-size:10.67px;color:#000;right:1397px;">0.00</div>
<div id="t164" class="t" style="top:700px;font-size:10.67px;color:#000;left:188px;">State Child Care Fund - ER</div>
<div id="t165" class="t" style="top:700px;font-size:10.67px;color:#000;right:1397px;">0.00</div>
<div id="t166" class="t" style="top:715px;font-size:10.67px;color:#000;left:188px;">Local Income Tax</div>
<div id="t167" class="t" style="top:715px;font-size:10.67px;color:#000;right:1397px;">158.33</div>
<div id="t168" class="t" style="top:730px;font-size:10.67px;color:#000;left:188px;">School District Tax</div>
<div id="t169" class="t" style="top:730px;font-size:10.67px;color:#000;right:1397px;">0.00</div>
<div id="t170" class="t" style="top:745px;font-size:10.67px;color:#000;font-weight:700;letter-spacing:0.472px;left:188px;">Total Taxes Debited</div>
<div id="t171" class="t" style="top:745px;font-size:10.67px;color:#000;font-weight:700;right:1300px;">72,156.98</div>
<div id="t172" class="t" style="top:760px;font-size:10.67px;color:#000;font-weight:700;letter-spacing:0.629px;left:28px;">Other Transfers</div>
<div id="t173" class="t" style="top:760px;font-size:10.67px;color:#000;left:188px;">401K - Retirement Services Acct. No.XXXXXX6564</div>
<div id="t174" class="t" style="top:760px;font-size:10.67px;color:#000;right:1300px;">14,182.71</div>
<div id="t175" class="t" style="top:773px;font-size:10.67px;color:#000;left:188px;">401k Loan repayment Acct. No.XXXXXX6564</div>
<div id="t176" class="t" style="top:773px;font-size:10.67px;color:#000;right:1300px;">196.81</div>
<div id="t177" class="t" style="top:788px;font-size:10.67px;color:#000;left:188px;">Full Service Direct Deposit Acct.</div>
<div id="t178" class="t" style="top:788px;font-size:10.67px;color:#000;right:1300px;">161,206.60</div>
<div id="t179" class="t" style="top:803px;font-size:10.67px;color:#000;left:188px;">Wage Garnishments Acct. No.XXXXXX6564Tran/ABAXXXXXXXXX</div>
<div id="t180" class="t" style="top:803px;font-size:10.67px;color:#000;right:1300px;">384.09</div>
<div id="t181" class="t" style="top:803px;font-size:10.67px;color:#000;font-weight:700;letter-spacing:0.293px;left:759px;">Total Liability</div>
<div id="t182" class="t" style="top:818px;font-size:10.67px;color:#000;font-weight:700;letter-spacing:0.446px;left:188px;">Total Amount Debited From Your Account</div>
<div id="t183" class="t" style="top:818px;font-size:10.67px;color:#000;font-weight:700;right:1166px;">248,127.19</div>
<div id="t184" class="t" style="top:818px;font-size:10.67px;color:#000;font-weight:700;right:1033px;">248,127.19</div>
<div id="t185" class="t" style="top:833px;font-size:10.67px;color:#000;font-weight:700;letter-spacing:0.289px;left:28px;">Bank Debits &amp; Other Liability</div>
<div id="t186" class="t" style="top:832px;font-size:10.67px;color:#000;left:188px;">Checks</div>
<div id="t187" class="t" style="top:832px;font-size:10.67px;color:#000;right:1300px;">0.00</div>
<div id="t188" class="t" style="top:832px;font-size:10.67px;color:#000;font-weight:700;right:1033px;">248,127.19</div>
<div id="t189" class="t" style="top:849px;font-size:10.67px;color:#000;left:188px;">Adjustments/Prepay/Voids</div>
<div id="t190" class="t" style="top:849px;font-size:10.67px;color:#000;right:1300px;">0.00</div>
<div id="t191" class="t" style="top:849px;font-size:10.67px;color:#000;font-weight:700;right:1033px;">248,127.19</div>
<div id="t192" class="t" style="top:864px;font-size:10.67px;color:#000;font-weight:700;letter-spacing:0.460px;left:28px;">Taxes- Your Responsibility</div>
<div id="t193" class="t" style="top:864px;font-size:10.67px;color:#000;font-weight:700;letter-spacing:0.331px;left:188px;">None this payroll</div>
<div id="t194" class="t" style="top:878px;font-size:10.67px;color:#000;font-weight:700;right:1033px;">248,127.19</div>
<div class="r" style="left:185px;top:172px;width:341px;height:1px;background:#000"></div>
<div class="r" style="left:185px;top:187px;width:341px;height:1px;background:#000"></div>
<div class="r" style="left:185px;top:202px;width:341px;height:1px;background:#000"></div>
<div class="r" style="left:185px;top:217px;width:341px;height:1px;background:#000"></div>
<div class="r" style="left:185px;top:232px;width:341px;height:1px;background:#000"></div>
<div class="r" style="left:185px;top:247px;width:341px;height:1px;background:#000"></div>
<div class="r" style="left:185px;top:262px;width:341px;height:1px;background:#000"></div>
<div class="r" style="left:185px;top:277px;width:341px;height:1px;background:#000"></div>
<div class="r" style="left:185px;top:292px;width:341px;height:1px;background:#000"></div>
<div class="r" style="left:185px;top:307px;width:341px;height:1px;background:#000"></div>
<div class="r" style="left:185px;top:322px;width:341px;height:1px;background:#000"></div>
<div class="r" style="left:185px;top:352px;width:341px;height:1px;background:#000"></div>
<div class="r" style="left:185px;top:367px;width:341px;height:1px;background:#000"></div>
<div class="r" style="left:185px;top:382px;width:341px;height:1px;background:#000"></div>
<div class="r" style="left:185px;top:397px;width:341px;height:1px;background:#000"></div>
<div class="r" style="left:185px;top:412px;width:341px;height:1px;background:#000"></div>
<div class="r" style="left:185px;top:427px;width:341px;height:1px;background:#000"></div>
<div class="r" style="left:185px;top:442px;width:341px;height:1px;background:#000"></div>
<div class="r" style="left:185px;top:457px;width:341px;height:1px;background:#000"></div>
<div class="r" style="left:185px;top:472px;width:341px;height:1px;background:#000"></div>
<div class="r" style="left:185px;top:487px;width:341px;height:1px;background:#000"></div>
<div class="r" style="left:185px;top:502px;width:341px;height:1px;background:#000"></div>
<div class="r" style="left:185px;top:517px;width:341px;height:1px;background:#000"></div>
<div class="r" style="left:185px;top:532px;width:341px;height:1px;background:#000"></div>
<div class="r" style="left:185px;top:547px;width:341px;height:1px;background:#000"></div>
<div class="r" style="left:185px;top:562px;width:341px;height:1px;background:#000"></div>
<div class="r" style="left:185px;top:577px;width:341px;height:1px;background:#000"></div>
<div class="r" style="left:185px;top:592px;width:341px;height:1px;background:#000"></div>
<div class="r" style="left:185px;top:607px;width:341px;height:1px;background:#000"></div>
<div class="r" style="left:185px;top:622px;width:341px;height:1px;background:#000"></div>
<div class="r" style="left:185px;top:637px;width:341px;height:1px;background:#000"></div>
<div class="r" style="left:185px;top:652px;width:341px;height:1px;background:#000"></div>
<div class="r" style="left:185px;top:667px;width:341px;height:1px;background:#000"></div>
<div class="r" style="left:185px;top:682px;width:341px;height:1px;background:#000"></div>
<div class="r" style="left:185px;top:697px;width:341px;height:1px;background:#000"></div>
<div class="r" style="left:185px;top:712px;width:341px;height:1px;background:#000"></div>
<div class="r" style="left:185px;top:727px;width:341px;height:1px;background:#000"></div>
<div class="r" style="left:185px;top:742px;width:438px;height:1px;background:#000"></div>
<div class="r" style="left:26px;top:756px;width:597px;height:2px;background:#000"></div>
<div class="r" style="left:185px;top:772px;width:438px;height:1px;background:#000"></div>
<div class="r" style="left:185px;top:785px;width:438px;height:1px;background:#000"></div>
<div class="r" style="left:185px;top:800px;width:438px;height:1px;background:#000"></div>
<div class="r" style="left:185px;top:814px;width:705px;height:2px;background:#000"></div>
<div class="r" style="left:26px;top:829px;width:597px;height:2px;background:#000"></div>
<div class="r" style="left:185px;top:846px;width:340px;height:1px;background:#000"></div>
<div class="r" style="left:757px;top:830px;width:133px;height:1px;background:#000"></div>
<div class="r" style="left:757px;top:846px;width:133px;height:1px;background:#000"></div>
<div class="r" style="left:26px;top:860px;width:597px;height:2px;background:#000"></div>
<div class="r" style="left:26px;top:875px;width:864px;height:2px;background:#000"></div>
<div class="r" style="left:755px;top:816px;width:2px;height:59px;background:#000"></div>
<div class="r" style="left:524px;top:829px;width:96px;height:15px;border:2px solid #1e7145"></div>
<div class="r" style="left:619px;top:843px;width:7px;height:7px;background:#fff"></div>
<div class="r" style="left:620px;top:844px;width:5px;height:5px;background:#1e7145"></div>
</div></div>
<div class="r" style="left:1898px;top:147px;width:22px;height:831px;background:#f0f0f0;"></div>
<div class="r" style="left:1901px;top:149px;width:17px;height:831px;border-radius:8px;background:#f4f4f4"></div>
<svg class="r" style="left:1903px;top:153px;" width="12" height="8" viewBox="0 0 12 8"><path d="M6 1 L11 7 H1 Z" fill="#6d6d6d"/></svg>
<svg class="r" style="left:1903px;top:967px;" width="12" height="8" viewBox="0 0 12 8"><path d="M6 7 L11 1 H1 Z" fill="#6d6d6d"/></svg>
<div class="r" style="left:1905px;top:280px;width:9px;height:672px;background:#6e6e6e;border-radius:4.5px;"></div>
<div class="r" style="left:0px;top:978px;width:1920px;height:32px;background:#f0f0f0;border-top:1px solid #dcdcdc;box-sizing:border-box;"></div>
<svg class="r" style="left:27px;top:988px;" width="9" height="11" viewBox="0 0 9 11"><path d="M7.5 1 L2 5.5 L7.5 10" fill="none" stroke="#a0a0a0" stroke-width="1.1"/></svg>
<svg class="r" style="left:60px;top:988px;" width="9" height="11" viewBox="0 0 9 11"><path d="M1.5 1 L7 5.5 L1.5 10" fill="none" stroke="#8a8a8a" stroke-width="1.1"/></svg>
<div class="r" style="left:115px;top:976px;width:141px;height:29px;background:#fff;border:1px solid #dcdcdc;border-top:none;border-radius:0 0 5px 5px"></div>
<div id="t195" class="t" style="top:985px;font-size:13.5px;color:#1a1a1a;font-weight:700;letter-spacing:-0.222px;left:124px;">Statistical Summary</div>
<div class="r" style="left:124px;top:1001px;width:125px;height:2px;background:#107c41;"></div>
<div class="r" style="left:261px;top:986px;width:1px;height:16px;background:#c8c8c8;"></div>
<div id="t196" class="t" style="top:988px;font-size:14px;color:#242424;letter-spacing:-0.111px;left:274.5px;">Statistics</div>
<div class="r" style="left:342px;top:986px;width:1px;height:17px;background:#c8c8c8;"></div>
<div id="t197" class="t" style="top:988px;font-size:14px;color:#242424;letter-spacing:-0.333px;left:357.0px;">Federal Taxes</div>
<div class="r" style="left:453px;top:986px;width:1px;height:17px;background:#c8c8c8;"></div>
<div id="t198" class="t" style="top:988px;font-size:14px;color:#242424;letter-spacing:-0.200px;left:467.5px;">State Taxes</div>
<div class="r" style="left:550px;top:986px;width:1px;height:17px;background:#c8c8c8;"></div>
<div id="t199" class="t" style="top:988px;font-size:14px;color:#242424;letter-spacing:-0.300px;left:563.5px;">Local Taxes</div>
<div class="r" style="left:647px;top:986px;width:1px;height:17px;background:#c8c8c8;"></div>
<div id="t200" class="t" style="top:988px;font-size:14px;color:#242424;letter-spacing:-0.050px;left:660.5px;">Hours &amp; Earnings</div>
<div class="r" style="left:782px;top:986px;width:1px;height:17px;background:#c8c8c8;"></div>
<div id="t201" class="t" style="top:988px;font-size:14px;color:#242424;letter-spacing:0.167px;left:795.5px;">Deductions</div>
<div class="r" style="left:879px;top:986px;width:1px;height:17px;background:#c8c8c8;"></div>
<div id="t202" class="t" style="top:988px;font-size:14px;color:#242424;letter-spacing:0.375px;left:892.0px;">Memos</div>
<div class="r" style="left:951px;top:986px;width:1px;height:17px;background:#c8c8c8;"></div>
<div id="t203" class="t" style="top:988px;font-size:14px;color:#242424;letter-spacing:0.194px;left:965.5px;">Funding Information</div>
<div class="r" style="left:1107px;top:986px;width:1px;height:17px;background:#c8c8c8;"></div>
<svg class="r" style="left:1149px;top:988px;" width="13" height="12" viewBox="0 0 13 12"><path d="M6.5 0.5 V11.5 M0.5 6 H12.5" stroke="#7a7a7a" stroke-width="1.1"/></svg>
<div class="r" style="left:1404px;top:990px;width:2px;height:2px;background:#222;"></div>
<div class="r" style="left:1404px;top:994px;width:2px;height:2px;background:#222;"></div>
<div class="r" style="left:1404px;top:998px;width:2px;height:2px;background:#222;"></div>
<div class="r" style="left:1421px;top:985px;width:480px;height:17px;border-radius:8.5px;background:#f7f7f7"></div>
<svg class="r" style="left:1425px;top:988px;" width="8" height="11" viewBox="0 0 8 11"><path d="M1 5.5 L7.5 1 V10 Z" fill="#6d6d6d"/></svg>
<svg class="r" style="left:1889px;top:988px;" width="8" height="11" viewBox="0 0 8 11"><path d="M7 5.5 L0.5 1 V10 Z" fill="#6d6d6d"/></svg>
<div class="r" style="left:1438px;top:989px;width:114px;height:9px;background:#6f6f6f;border-radius:4.5px;"></div>
<div class="r" style="left:0px;top:1010px;width:1920px;height:1px;background:#fbfbfb;"></div>
<div class="r" style="left:0px;top:1011px;width:1920px;height:21px;background:#f3f3f3;"></div>
<div id="t204" class="t" style="top:1017px;font-size:11px;color:#242424;letter-spacing:-0.250px;left:11px;">Ready</div>
<svg class="r" style="left:61px;top:1014px;" width="17" height="16" viewBox="0 0 17 16"><path d="M1.5 13.5 V1.5 H14.5 V5" fill="none" stroke="#1a1a1a" stroke-width="1"/><path d="M1.5 3.5 H14.5" stroke="#1a1a1a" stroke-width="1"/><path d="M1.5 13.5 H5" stroke="#1a1a1a" stroke-width="1"/><path d="M3 5.5 H6 M3 7.5 H6 M3 9.5 H6" stroke="#1a1a1a" stroke-width="1"/><circle cx="10.5" cy="9.5" r="4" fill="#f3f3f3" stroke="#1a1a1a" stroke-width="1.1"/><rect x="9.3" y="8.3" width="2.4" height="2.4" fill="#1a1a1a"/></svg>
<svg class="r" style="left:93px;top:1013px;" width="17" height="16" viewBox="0 0 17 16"><circle cx="7" cy="3.2" r="1.7" fill="none" stroke="#1a1a1a" stroke-width="1"/><path d="M1.5 6 C1 4 3 3.5 4 4.6 C5 5.4 9 5.4 10 4.6 C11 3.5 13 4 12.5 6 L9.2 7.5 L8.8 10 L10.2 14.2 C10.4 15.2 9.2 15.4 8.8 14.6 L7 11.2 L5.4 14.6 C5 15.4 3.8 15.2 4 14.2 L5.2 10 L4.8 7.5 Z" fill="none" stroke="#1a1a1a" stroke-width="1"/><path d="M11.3 9.8 C11.3 7.8 15.2 7.8 15.2 10.2 C15.2 11.8 13.4 12 13.2 13.6" fill="none" stroke="#1a1a1a" stroke-width="1.2"/><circle cx="13.2" cy="15.2" r="0.8" fill="#1a1a1a"/></svg>
<div class="r" style="left:1620px;top:1011px;width:40px;height:21px;background:#e0e0e0;"></div>
<svg class="r" style="left:1632px;top:1014px;" width="15" height="14" viewBox="0 0 15 14"><path d="M1.5 1.5 H13.5 V12.5 H1.5 Z M1.5 5.2 H13.5 M1.5 8.8 H13.5 M5.5 1.5 V12.5 M9.5 1.5 V12.5" fill="none" stroke="#333" stroke-width="1"/></svg>
<svg class="r" style="left:1672px;top:1013px;" width="16" height="16" viewBox="0 0 16 16"><path d="M1.5 1.5 H14.5 V14.5 H1.5 Z" fill="none" stroke="#1a1a1a" stroke-width="1.1"/><path d="M4 3.5 H12 V12.5 H4 Z" fill="none" stroke="#1a1a1a" stroke-width="1"/><path d="M6 5.8 H10 M6 8 H10 M6 10.2 H10" stroke="#1a1a1a" stroke-width="1"/></svg>
<svg class="r" style="left:1712px;top:1014px;" width="15" height="14" viewBox="0 0 15 14"><path d="M1.5 1.5 H13.5 V12.5 H1.5 Z M1.5 8.5 H13.5 M7.5 1.5 V8.5 M4.5 1.5 V6 M10.5 1.5 V6" fill="none" stroke="#b8b8b8" stroke-width="1"/></svg>
<div class="r" style="left:1746px;top:1021px;width:8px;height:1px;background:#333;"></div>
<div class="r" style="left:1759px;top:1021px;width:99px;height:1px;background:#8a8a8a;"></div>
<div class="r" style="left:1806px;top:1016px;width:5px;height:11px;background:#555;"></div>
<svg class="r" style="left:1863px;top:1016px;" width="10" height="10" viewBox="0 0 10 10"><path d="M5 0.5 V9.5 M0.5 5 H9.5" stroke="#333" stroke-width="1"/></svg>
<div id="t205" class="t" style="top:1017px;font-size:11px;color:#242424;letter-spacing:0.000px;left:1885px;">100%</div>
<div class="r" style="left:0px;top:1032px;width:1920px;height:1px;background:#c4c4c4;"></div>
<div class="r" style="left:0px;top:1033px;width:1920px;height:47px;background:#eeeeee;"></div>
<svg class="r" style="left:19px;top:1036px;" width="27" height="34" viewBox="0 0 27 34"><defs><linearGradient id="sun" x1="0" y1="0" x2="1" y2="1"><stop offset="0" stop-color="#f7c82a"/><stop offset="1" stop-color="#f65f00"/></linearGradient><linearGradient id="cld" x1="0" y1="0" x2="0" y2="1"><stop offset="0" stop-color="#a3c6f6"/><stop offset="1" stop-color="#dde8f7"/></linearGradient></defs><circle cx="11.8" cy="18.8" r="10" fill="url(#sun)"/><path d="M6 30.8 C4 30.8 3.8 26 6 24.8 C7 20.5 9.5 19 12.5 19 C15.5 19 17 20.5 17.5 22.5 C19.5 21.5 23.5 22 23.8 26 C24 29 23 30.8 21.5 30.8 Z" fill="url(#cld)" stroke="#8db3ec" stroke-width="0.7"/><circle cx="18.8" cy="9.7" r="8.3" fill="#eeeeee"/><circle cx="18.8" cy="9.7" r="7.6" fill="#c42b1c"/></svg>
<div id="t206" class="t" style="top:1041px;font-size:11px;color:#fff;letter-spacing:0.000px;left:35px;">1</div>
<div id="t207" class="t" style="top:1042px;font-size:12px;color:#1a1a1a;letter-spacing:-0.500px;left:50.5px;">37°F</div>
<div id="t208" class="t" style="top:1058px;font-size:12px;color:#5a5a5a;letter-spacing:-0.136px;left:50.5px;">Partly sunny</div>
<svg class="r" style="left:551px;top:1045px;" width="23" height="23" viewBox="0 0 23 23"><defs><linearGradient id="win" gradientUnits="userSpaceOnUse" x1="0" y1="0" x2="23" y2="23"><stop offset="0" stop-color="#4fd0fb"/><stop offset="1" stop-color="#0565c9"/></linearGradient></defs><rect x="0" y="0" width="11" height="11" rx="1" fill="url(#win)"/><rect x="12" y="0" width="11" height="11" rx="1" fill="url(#win)"/><rect x="0" y="12" width="11" height="11" rx="1" fill="url(#win)"/><rect x="12" y="12" width="11" height="11" rx="1" fill="url(#win)"/></svg>
<div class="r" style="left:588px;top:1040px;width:217px;height:30px;border-radius:16px;background:#fafafa;border:1px solid #dedede"></div>
<svg class="r" style="left:598px;top:1048px;" width="16" height="16" viewBox="0 0 16 16"><circle cx="6.8" cy="6.8" r="5.3" fill="none" stroke="#1a1a1a" stroke-width="1.7"/><path d="M10.6 10.6 L14.5 14.5" stroke="#1a1a1a" stroke-width="1.9" stroke-linecap="round"/></svg>
<div id="t209" class="t" style="top:1050px;font-size:14px;color:#5f5f5f;letter-spacing:-0.500px;left:624.5px;">Search</div>
<svg class="r" style="left:818px;top:1044px;" width="26" height="24" viewBox="0 0 26 24"><rect x="7" y="1" width="17" height="15" rx="1" fill="#f8f8f8" stroke="#e4e4e4" stroke-width="0.6"/><rect x="1" y="7" width="17" height="15" rx="1" fill="#1f1f1f"/><rect x="7" y="7" width="11" height="9" fill="#bdbdbd"/></svg>
<svg class="r" style="left:862px;top:1044px;" width="26" height="24" viewBox="0 0 26 24"><path d="M1 3 a1.5 1.5 0 0 1 1.5 -1.5 H9 L11.5 4 H23.5 a1.5 1.5 0 0 1 1.5 1.5 V21 a1.5 1.5 0 0 1 -1.5 1.5 H2.5 A1.5 1.5 0 0 1 1 21 Z" fill="#f7c14a"/><path d="M1 8 H25 V21 a1.5 1.5 0 0 1 -1.5 1.5 H2.5 A1.5 1.5 0 0 1 1 21 Z" fill="#fdd15a"/><rect x="7" y="16" width="12" height="6.5" rx="1" fill="#1f8ad2"/></svg>
<div class="r" style="left:872px;top:1072px;width:6px;height:3px;background:#7d7d7d;border-radius:1.5px;"></div>
<svg class="r" style="left:907px;top:1044px;" width="25" height="25" viewBox="0 0 25 25"><defs><linearGradient id="edg" x1="0" y1="0" x2="1" y2="0.6"><stop offset="0" stop-color="#3cc3f6"/><stop offset="0.5" stop-color="#2fc3d0"/><stop offset="1" stop-color="#55dc50"/></linearGradient></defs><path d="M0.2 13 C0.2 5.5 5.8 0.3 12.5 0.3 C19.5 0.3 24 5 24 10.8 C24 15.5 20.5 18.5 16.8 18.5 C13.5 18.5 12 16.2 12 14.5 L12 24 L0.2 24 Z" fill="url(#edg)"/><path d="M0.2 19 C0.5 12.5 4.5 9.6 9 9.6 C12.5 9.6 14.5 11.2 15.2 13 C13.5 12 12 13 12 15 C12 18.5 15.5 20.8 19.5 20.8 C21 20.8 22.2 20.6 23 20.2 C20.5 23 17 24.2 13.5 24.2 L0.2 24.2 Z" fill="#1279d6"/><path d="M12.5 20 C15 21.8 19 22 23 20.2 C20.5 23 17 24.2 13.5 24.2 L12.5 24.2 Z" fill="#0b4f9e"/><circle cx="12.7" cy="13.3" r="2.6" fill="#f2f4f6"/><rect x="0.3" y="16.2" width="11.7" height="7.8" fill="#e08a0c"/><rect x="0.3" y="20" width="11.7" height="4" fill="#a85a06"/><rect x="5.3" y="19" width="1.6" height="1.6" fill="#f6d21c"/><path d="M4.2 16.2 V15 H7.8 V16.2" fill="none" stroke="#3a3a3a" stroke-width="0.9"/></svg>
<div class="r" style="left:916px;top:1072px;width:6px;height:3px;background:#7d7d7d;border-radius:1.5px;"></div>
<div class="r" style="left:943px;top:1036px;width:40px;height:39px;border-radius:5px;background:#f0b4b4;border:1px solid #e8a0a0;box-sizing:border-box"></div>
<svg class="r" style="left:952px;top:1046px;" width="25" height="21" viewBox="0 0 25 21"><circle cx="10" cy="3.5" r="3" fill="#7b83eb"/><circle cx="18" cy="5" r="2.5" fill="#5059c9"/><rect x="13" y="8.5" width="10" height="11" rx="5" fill="#5059c9"/><rect x="4" y="7.5" width="13" height="13" rx="3" fill="#7b83eb"/><rect x="0" y="8" width="10" height="10" rx="1.5" fill="#4b53bc"/><path d="M2.3 10.5 H7.7 M5 10.5 V16" stroke="#fff" stroke-width="1.5"/></svg>
<div class="r" style="left:963px;top:1039px;width:16px;height:16px;border-radius:50%;background:#c42b1c;border:1px solid #f0b4b4"></div>
<div id="t210" class="t" style="top:1043px;font-size:11px;color:#fff;letter-spacing:0.000px;left:968.5px;">1</div>
<div class="r" style="left:947px;top:1072px;width:32px;height:3px;background:#c42b1c;border-radius:1.5px;"></div>
<svg class="r" style="left:996px;top:1044px;" width="26" height="26" viewBox="0 0 26 26"><rect x="1" y="3" width="19" height="13" fill="#1a5ca8"/><rect x="2.5" y="4.5" width="16" height="10" fill="#6fb3f5"/><path d="M6 17 H15 L17 20 H4 Z" fill="#8d8d8d"/><circle cx="19" cy="19" r="6" fill="#d5d5d5" stroke="#888" stroke-width="0.8"/><path d="M16 20 L19 17 M19 21 L22 18" stroke="#2d9b3a" stroke-width="1.2"/></svg>
<div class="r" style="left:1004px;top:1072px;width:6px;height:3px;background:#7d7d7d;border-radius:1.5px;"></div>
<svg class="r" style="left:1038px;top:1044px;" width="26" height="26" viewBox="0 0 26 26"><circle cx="13" cy="13" r="11.2" fill="none" stroke="#1565c0" stroke-width="2.2"/><path d="M18 8.5 A6.2 6.2 0 1 0 18 17.5" fill="none" stroke="#1565c0" stroke-width="2.6"/><path d="M13 9.5 V13 H17" fill="none" stroke="#1565c0" stroke-width="0"/></svg>
<svg class="r" style="left:1082px;top:1044px;" width="25" height="25" viewBox="0 0 25 25"><circle cx="12.5" cy="12.5" r="12" fill="#dd4b3e"/><path d="M12.5 12.5 L2.1 6.5 A12 12 0 0 0 12.5 24.5 Z" fill="#1da462"/><path d="M12.5 12.5 L12.5 24.5 A12 12 0 0 0 22.9 6.5 Z" fill="#ffcd46"/><path d="M12.5 0.5 A12 12 0 0 0 2.1 6.5 L7.3 15.5 L12.5 6.5 H22.9 A12 12 0 0 0 12.5 0.5 Z" fill="#dd4b3e"/><circle cx="12.5" cy="12.5" r="5.6" fill="#fff"/><circle cx="12.5" cy="12.5" r="4.4" fill="#1a73e8"/></svg>
<div class="r" style="left:1092px;top:1072px;width:6px;height:3px;background:#7d7d7d;border-radius:1.5px;"></div>
<svg class="r" style="left:1126px;top:1044px;" width="25" height="25" viewBox="0 0 25 25"><path d="M8 3 L19 1 L24 6 V20 L13 23 L8 19 Z" fill="#1a8ee0"/><path d="M13 6 L24 6 V14 L13 12 Z" fill="#50d9ff"/><rect x="1" y="9" width="12" height="12" rx="2" fill="#0f5fb8"/><circle cx="7" cy="15" r="3.2" fill="none" stroke="#fff" stroke-width="1.6"/></svg>
<div class="r" style="left:1136px;top:1072px;width:6px;height:3px;background:#7d7d7d;border-radius:1.5px;"></div>
<svg class="r" style="left:1170px;top:1044px;" width="24" height="25" viewBox="0 0 24 25"><rect x="6" y="1" width="17" height="22" rx="2.5" fill="#a33bd1"/><rect x="14" y="1" width="9" height="22" rx="2" fill="#d368e8"/><rect x="1" y="8" width="12" height="12" rx="2" fill="#7719aa"/><path d="M4 17 V11 L10 17 V11" fill="none" stroke="#fff" stroke-width="1.4"/></svg>
<div class="r" style="left:1180px;top:1072px;width:6px;height:3px;background:#7d7d7d;border-radius:1.5px;"></div>
<svg class="r" style="left:1217px;top:1046px;" width="20" height="20" viewBox="0 0 20 20"><defs><linearGradient id="qg" x1="0" y1="0" x2="0" y2="1"><stop offset="0" stop-color="#5b2fd6"/><stop offset="1" stop-color="#1f0563"/></linearGradient></defs><path d="M5 0 H15 L20 5 V15 L15 20 H5 L0 15 V5 Z" fill="url(#qg)"/><path d="M13.5 7 C12.5 5 7 5 6.5 9 C6 13 10 14.5 12 12.5 L14 15.5" fill="none" stroke="#f3dcff" stroke-width="2.4" stroke-linecap="round"/><circle cx="4" cy="6" r="0.7" fill="#fff"/><circle cx="16" cy="4.5" r="0.9" fill="#fff"/><circle cx="16.5" cy="13" r="0.6" fill="#fff"/></svg>
<div class="r" style="left:1224px;top:1072px;width:6px;height:3px;background:#7d7d7d;border-radius:1.5px;"></div>
<div class="r" style="left:1256px;top:1037px;width:34px;height:38px;border-radius:5px;background:#f4f4f4;border:1px solid #e4e4e4;box-sizing:border-box"></div>
<div class="r" style="left:1252px;top:1037px;width:34px;height:38px;border-radius:5px;background:#f7f7f7;border:1px solid #e2e2e2;box-sizing:border-box"></div>
<svg class="r" style="left:1259px;top:1045px;" width="22" height="22" viewBox="0 0 22 22"><defs><linearGradient id="xg" x1="0" y1="0" x2="1" y2="1"><stop offset="0" stop-color="#3f9a3f"/><stop offset="1" stop-color="#1b6b2a"/></linearGradient></defs><rect x="3.5" y="0" width="18" height="22" rx="1.5" fill="url(#xg)"/><rect x="3.5" y="0" width="9" height="7" rx="1" fill="#6fd36a"/><rect x="12.5" y="0" width="9" height="7" rx="1" fill="#8ee476"/><rect x="3.5" y="7" width="9" height="7" fill="#4caf4c"/><rect x="0" y="9" width="10" height="11" rx="1.8" fill="#107c41"/><path d="M2.8 11.8 L7.2 17.2 M7.2 11.8 L2.8 17.2" stroke="#fff" stroke-width="1.6"/></svg>
<div class="r" style="left:1263px;top:1072px;width:16px;height:3px;background:#0067c0;border-radius:1.5px;"></div>
<svg class="r" style="left:1306px;top:1044px;" width="19" height="24" viewBox="0 0 19 24"><rect x="0.3" y="0.3" width="18.4" height="23.4" rx="2" fill="#6d7987"/><rect x="2" y="2" width="15" height="4.2" fill="#46d3f5"/><g fill="#d5dce4"><rect x="2" y="8" width="4.2" height="4.2"/><rect x="7.4" y="8" width="4.2" height="4.2"/><rect x="12.8" y="8" width="4.2" height="4.2"/><rect x="2" y="13" width="4.2" height="4.2"/><rect x="7.4" y="13" width="4.2" height="4.2"/><rect x="2" y="18" width="4.2" height="4.2"/><rect x="7.4" y="18" width="4.2" height="4.2"/></g><rect x="12.8" y="13" width="4.2" height="9.2" fill="#1a4f9a"/></svg>
<div class="r" style="left:1312px;top:1072px;width:6px;height:3px;background:#7d7d7d;border-radius:1.5px;"></div>
<svg class="r" style="left:1348px;top:1045px;" width="22" height="21" viewBox="0 0 22 21"><rect x="0" y="0" width="22" height="21" rx="4.5" fill="#b70d00"/><path d="M11 4 C10 4 9.8 5.5 10.5 7.5 C11.5 10.5 13 12.5 17 13.5 C18.5 14 18.5 12.2 17 12.2 C13.5 12.2 8.5 13.5 6 16 C5 17 5.5 18 6.5 17.5 C8.5 16 10.5 11 11.3 8 C11.8 6 12 4 11 4 Z" fill="none" stroke="#fff" stroke-width="1.3"/></svg>
<div class="r" style="left:1356px;top:1072px;width:6px;height:3px;background:#7d7d7d;border-radius:1.5px;"></div>
<svg class="r" style="left:1698px;top:1051px;" width="14" height="9" viewBox="0 0 14 9"><path d="M1 7.5 L7 1.5 L13 7.5" fill="none" stroke="#1a1a1a" stroke-width="1.4"/></svg>
<svg class="r" style="left:1730px;top:1047px;" width="14" height="18" viewBox="0 0 14 18"><rect x="3.8" y="0.8" width="6.4" height="11" rx="3.2" fill="none" stroke="#2566c4" stroke-width="1.5"/><path d="M1 8 C1 16 13 16 13 8 M7 13.5 V17" fill="none" stroke="#2566c4" stroke-width="1.4"/></svg>
<svg class="r" style="left:1760px;top:1047px;" width="18" height="15" viewBox="0 0 18 15"><path d="M1 5.5 C5.5 1 12.5 1 17 5.5" fill="none" stroke="#1a1a1a" stroke-width="1.3"/><path d="M3.5 8 C6.5 5 11.5 5 14.5 8" fill="none" stroke="#1a1a1a" stroke-width="1.3"/><path d="M6 10.5 C7.8 9 10.2 9 12 10.5" fill="none" stroke="#1a1a1a" stroke-width="1.3"/><circle cx="9" cy="13" r="1.3" fill="#1a1a1a"/></svg>
<svg class="r" style="left:1784px;top:1047px;" width="18" height="16" viewBox="0 0 18 16"><path d="M1 5.5 H4.5 L8.5 1.5 V14.5 L4.5 10.5 H1 Z" fill="none" stroke="#1a1a1a" stroke-width="1.2"/><path d="M11 5 C12.5 6.5 12.5 9.5 11 11 M13.5 3 C16 5.5 16 10.5 13.5 13" fill="none" stroke="#1a1a1a" stroke-width="1.2"/></svg>
<svg class="r" style="left:1808px;top:1047px;" width="23" height="16" viewBox="0 0 23 16"><rect x="1.2" y="4.6" width="18.2" height="9" rx="2" fill="#eeeeee" stroke="#1a1a1a" stroke-width="1.3"/><rect x="19.6" y="7.3" width="1.8" height="3.8" rx="0.6" fill="#1a1a1a"/><path d="M2.6 7 H9.6 L11.2 9 L12.8 7 H18 V12.3 H2.6 Z" fill="#138a13"/><path d="M13.2 0.6 L8.8 7.8 H11.4 L10.4 11.6 L14.8 5.2 H12.2 L13.6 0.6 Z" fill="#1a1a1a" stroke="#1a1a1a" stroke-width="0.4"/></svg>
<div id="t211" class="t" style="top:1043px;font-size:12px;color:#1a1a1a;letter-spacing:-0.071px;right:19px;">12:45 PM</div>
<div id="t212" class="t" style="top:1058px;font-size:12px;color:#1a1a1a;letter-spacing:0.188px;right:19px;">3/24/2026</div></body></html>
